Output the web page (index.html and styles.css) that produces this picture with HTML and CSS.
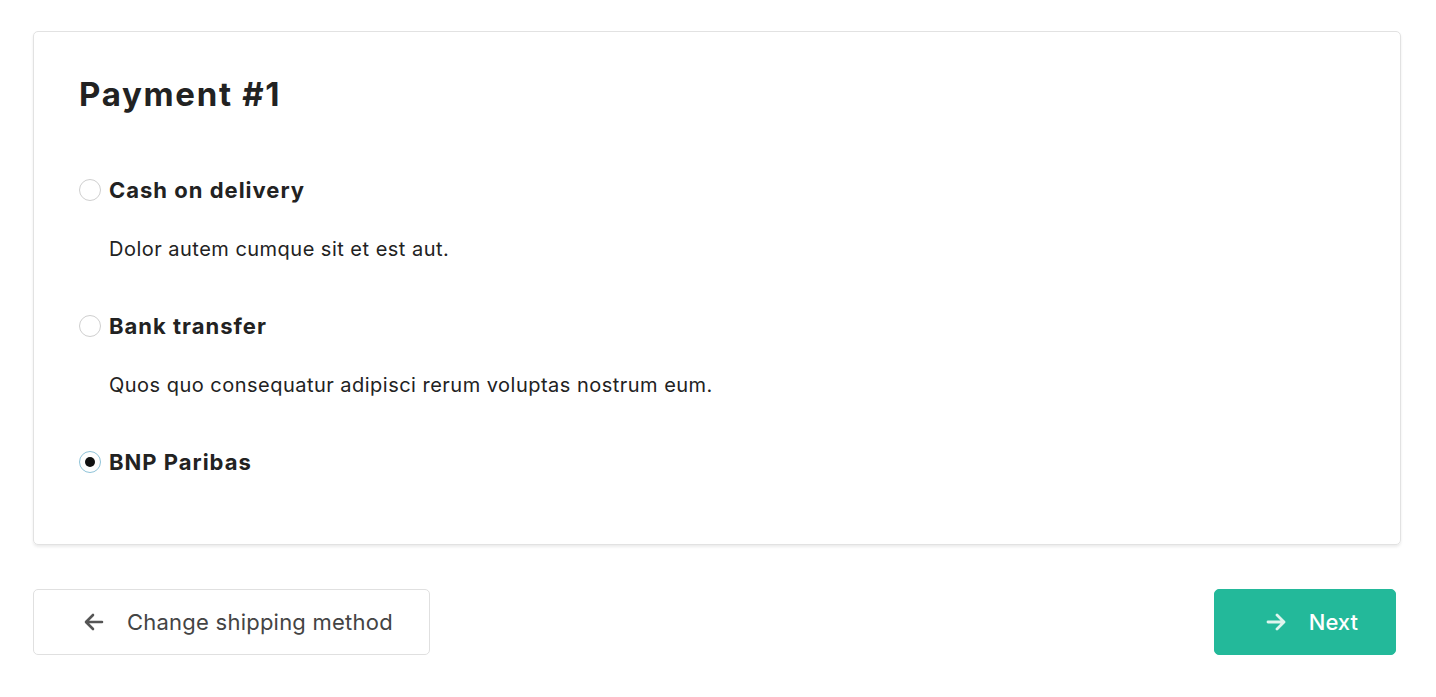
FILE: index.html
```html
<!DOCTYPE html>
<html lang="en">
<head>
<meta charset="utf-8">
<title>Payment</title>
<link rel="stylesheet" href="styles.css">
</head>
<body>
<div class="page">
  <section class="card">
    <h1 class="title">Payment #1</h1>
    <div class="option">
      <label class="option-label"><span class="radio"></span>Cash on delivery</label>
      <p class="option-desc">Dolor autem cumque sit et est aut.</p>
    </div>
    <div class="option">
      <label class="option-label"><span class="radio"></span>Bank transfer</label>
      <p class="option-desc">Quos quo consequatur adipisci rerum voluptas nostrum eum.</p>
    </div>
    <div class="option option-last">
      <label class="option-label"><span class="radio radio-checked"></span>BNP Paribas</label>
    </div>
  </section>
  <div class="actions">
    <button class="btn btn-back">
      <svg class="btn-icon" viewBox="0 0 24 24" width="24" height="24"><path d="M20 12H5M11 5l-7 7 7 7" fill="none" stroke="currentColor" stroke-width="2.6" stroke-linecap="round" stroke-linejoin="round"/></svg>
      <span>Change shipping method</span>
    </button>
    <button class="btn btn-next">
      <svg class="btn-icon" viewBox="0 0 24 24" width="24" height="24"><path d="M4 12h15M13 5l7 7-7 7" fill="none" stroke="currentColor" stroke-width="2.8" stroke-linecap="round" stroke-linejoin="round"/></svg>
      <span>Next</span>
    </button>
  </div>
</div>
</body>
</html>
```

FILE: styles.css
```css
* { box-sizing: border-box; }
html, body { margin: 0; padding: 0; background: #fff; }
body {
  font-family: Inter, "Noto Sans", sans-serif;
  color: #222;
}

.page { padding: 31px 35px 0 33px; }

.card {
  border: 1px solid #e2e2e2;
  border-radius: 5px;
  box-shadow: 0 2px 3px rgba(0,0,0,0.08);
  padding: 45px 45px 45px 45px;
}

.title {
  margin: 0 0 64px 0;
  font-size: 33px;
  line-height: 34px;
  font-weight: 700;
  color: #222;
  letter-spacing: 1.7px;
}

.option { margin-bottom: 47px; }
.option-last { margin-bottom: 22px; }

.option-label {
  display: flex;
  align-items: center;
  gap: 8px;
  font-size: 22px;
  line-height: 30px;
  font-weight: 700;
  color: #222;
  letter-spacing: 1px;
}

.radio {
  width: 22px;
  height: 22px;
  border-radius: 50%;
  border: 1px solid #cfcfcf;
  background: #fff;
  display: flex;
  align-items: center;
  justify-content: center;
  flex: none;
}
.radio-checked { border-color: #8fc3d8; }
.radio-checked::after {
  content: "";
  width: 10px;
  height: 10px;
  border-radius: 50%;
  background: #111;
}

.option-desc {
  margin: 29px 0 0 30px;
  font-size: 20px;
  line-height: 30px;
  color: #222;
  letter-spacing: 0.48px;
}

.actions {
  display: flex;
  justify-content: space-between;
  margin-top: 44px;
  padding-right: 5px;
}

.btn {
  display: flex;
  align-items: center;
  gap: 21px;
  height: 66px;
  border-radius: 5px;
  font-family: Inter, "Noto Sans", sans-serif;
  font-size: 22px;
  cursor: pointer;
}
.btn-icon { flex: none; }

.btn-back {
  background: #fff;
  border: 1px solid #e0e0e0;
  color: #444;
  padding: 0 36px 0 48px;
  letter-spacing: 0.23px;
}
.btn-back .btn-icon { color: #555; }

.btn-next {
  background: #23b99a;
  border: 1px solid #23b99a;
  color: #fff;
  padding: 0 37px 0 49px;
  font-weight: 500;
}
.btn-next .btn-icon { color: #dff5ee; }
```
